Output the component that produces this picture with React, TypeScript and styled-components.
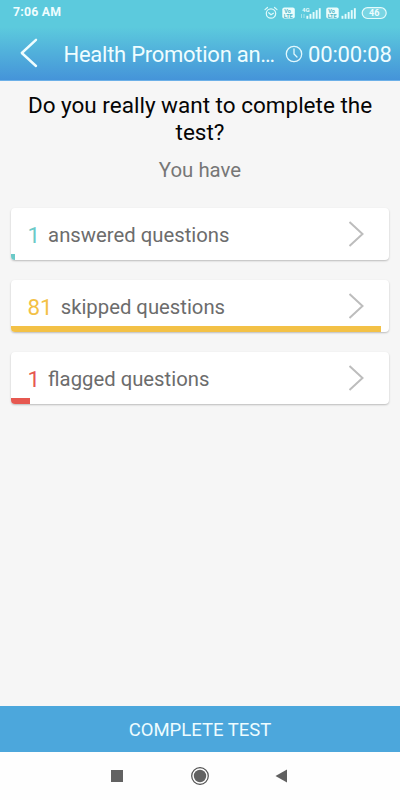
import React from "react";
import styled, { createGlobalStyle } from "styled-components";

const GlobalStyle = createGlobalStyle`
  * { box-sizing: border-box; }
  body { margin: 0; background: #f6f6f6; font-family: Roboto, sans-serif; }
`;

const Screen = styled.div`
  display: flex;
  flex-direction: column;
  width: 400px;
  height: 800px;
  background: #f6f6f6;
  overflow: hidden;
`;

const Header = styled.header`
  height: 81px;
  flex: none;
  background: linear-gradient(#5ccadd 0, #5ccadd 27px, #4594d9 80px, #6cb0e8 80px);
  color: #effdff;
`;

const StatusBar = styled.div`
  display: flex;
  align-items: center;
  justify-content: space-between;
  height: 25px;
  padding: 0 13px;
`;

const StatusTime = styled.span`
  font-size: 12.3px;
  font-weight: 700;
  letter-spacing: 0.2px;
  line-height: 25px;
`;

const StatusIcons = styled.svg`
  display: block;
  width: 124px;
  height: 14px;
`;

const TitleBar = styled.div`
  display: flex;
  align-items: center;
  height: 56px;
  padding: 0 9px 0 20px;
`;

const BackIcon = styled.svg`
  width: 18px;
  height: 30px;
  flex: none;
`;

const Title = styled.h1`
  margin: 4px 0 0 25.5px;
  width: 212.5px;
  flex: none;
  font-size: 22px;
  letter-spacing: -0.26px;
  line-height: 28px;
  font-weight: 400;
  white-space: nowrap;
`;

const ClockIcon = styled.svg`
  width: 18px;
  height: 18px;
  flex: none;
  margin: 1px 0 0 9px;
`;

const Timer = styled.span`
  margin: 4px 0 0 5px;
  font-size: 22px;
  letter-spacing: -0.15px;
  line-height: 28px;
  white-space: nowrap;
`;

const Content = styled.main`
  flex: 1;
  padding: 11px 11px 0;
`;

const Question = styled.h2`
  margin: 0;
  color: #050505;
  font-size: 22.5px;
  line-height: 27px;
  font-weight: 400;
  text-align: center;
`;

const Subtitle = styled.p`
  margin: 11px 0 25px;
  color: #777;
  font-size: 20.4px;
  line-height: 26px;
  text-align: center;
`;

const CardList = styled.div`
  display: grid;
  gap: 20px;
`;

const Card = styled.button`
  display: flex;
  flex-direction: column;
  width: 378px;
  height: 52px;
  padding: 0;
  border: 0;
  border-radius: 4px;
  background: #fff;
  box-shadow: 0 1px 2px rgba(0, 0, 0, 0.24);
  overflow: hidden;
  font-family: inherit;
  text-align: left;
`;

const CardRow = styled.span`
  display: flex;
  align-items: center;
  width: 100%;
  height: 46px;
  padding: 8px 24px 0 16.5px;
`;

const Count = styled.span<{ $color: string }>`
  color: ${(p) => p.$color};
  font-size: 22.4px;
  line-height: 28px;
`;

const Label = styled.span`
  flex: 1;
  margin-left: 8px;
  color: #6c6c6c;
  font-size: 20.3px;
  line-height: 28px;
`;

const Chevron = styled.svg`
  width: 18px;
  height: 28px;
  margin-top: -2px;
`;

const Progress = styled.span<{ $color: string; $width: number }>`
  width: ${(p) => p.$width}px;
  height: 6px;
  background: ${(p) => p.$color};
`;

const CompleteButton = styled.button`
  flex: none;
  height: 46px;
  padding: 2px 0 0;
  border: 0;
  background: #4ca7dc;
  color: #edfcff;
  font-family: inherit;
  font-size: 18.5px;
  text-align: center;
`;

const NavBar = styled.nav`
  display: flex;
  flex: none;
  align-items: center;
  justify-content: space-between;
  height: 48px;
  padding: 0 109px;
  background: #fefefe;
`;

const NavIcon = styled.svg`
  width: 20px;
  height: 20px;
`;

const rows = [
  { count: "1", label: "answered questions", color: "#6bcac8", width: 4 },
  { count: "81", label: "skipped questions", color: "#f3c146", width: 370 },
  { count: "1", label: "flagged questions", color: "#e65850", width: 19 },
];

const signalBars = [0, 1, 2, 3, 4];

function VoLte({ x }: { x: number }) {
  return (
    <g transform={`translate(${x} 1.5)`}>
      <rect width="12.5" height="11" rx="2" fill="#e9fcfc" />
      <g fill="#4fb6c7" fontFamily="Roboto" fontWeight="700" fontSize="5.5">
        <text x="2" y="5.2">Vo</text>
        <text x="1.5" y="10">LTE</text>
      </g>
    </g>
  );
}

function Signal({ x }: { x: number }) {
  return (
    <g fill="#e4fbfc">
      {signalBars.map((i) => (
        <rect key={i} x={x + i * 3.1} y={9.8 - i * 1.9} width="1.9" height={3 + i * 1.9} />
      ))}
    </g>
  );
}

export default function App() {
  return (
    <Screen>
      <GlobalStyle />
      <Header>
        <StatusBar>
          <StatusTime>7:06 AM</StatusTime>
          <StatusIcons viewBox="0 0 124 14">
            <g fill="none" stroke="#dff9fa" strokeWidth="1.2" strokeLinecap="round">
              <circle cx="8" cy="7.5" r="4.7" />
              <path d="M2 3.6 4.5 1.5M11.5 1.5 14 3.6M5.7 6.7 8 8.7l2.4-1.5" />
            </g>
            <VoLte x={19.3} />
            <text x="39" y="5.5" fill="#e4fbfc" fontFamily="Roboto" fontSize="6" fontWeight="700">4G</text>
            <path d="M38.5 8v4M41 8v4" stroke="#b5eaf0" strokeWidth=".8" />
            <Signal x={43.4} />
            <VoLte x={63.2} />
            <Signal x={78.5} />
            <rect x="99.2" y="1.7" width="24" height="10.8" rx="5.4" fill="#79d5e3" stroke="#e4fbfc" strokeWidth="1.2" />
            <text x="111.2" y="10.3" fill="#effdff" fontFamily="Roboto" fontSize="9" fontWeight="700" textAnchor="middle">46</text>
          </StatusIcons>
        </StatusBar>
        <TitleBar>
          <BackIcon viewBox="0 0 18 30">
            <path d="M16 1.8 1.8 15 16 28" fill="none" stroke="#effdff" strokeWidth="2.4" strokeLinecap="round" strokeLinejoin="round" />
          </BackIcon>
          <Title>Health Promotion an…</Title>
          <ClockIcon viewBox="0 0 18 18">
            <circle cx="9" cy="9" r="7.7" fill="none" stroke="#e2f8fd" strokeWidth="1.3" />
            <path d="M9 4v5l3 3" fill="none" stroke="#e2f8fd" strokeWidth="1.3" strokeLinecap="round" />
          </ClockIcon>
          <Timer>00:00:08</Timer>
        </TitleBar>
      </Header>
      <Content>
        <Question>Do you really want to complete the test?</Question>
        <Subtitle>You have</Subtitle>
        <CardList>
          {rows.map((row) => (
            <Card key={row.label}>
              <CardRow>
                <Count $color={row.color}>{row.count}</Count>
                <Label>{row.label}</Label>
                <Chevron viewBox="0 0 18 28">
                  <path d="M2.5 2 15.5 14 2.5 26" fill="none" stroke="#bdbdbd" strokeWidth="2" />
                </Chevron>
              </CardRow>
              <Progress $color={row.color} $width={row.width} />
            </Card>
          ))}
        </CardList>
      </Content>
      <CompleteButton>COMPLETE TEST</CompleteButton>
      <NavBar>
        <NavIcon viewBox="0 0 20 20">
          <rect x="2" y="4" width="12" height="12" fill="#626262" />
        </NavIcon>
        <NavIcon viewBox="0 0 20 20">
          <circle cx="10" cy="10" r="8.3" fill="none" stroke="#505050" strokeWidth="1.2" />
          <circle cx="10" cy="10" r="6.2" fill="#626262" />
        </NavIcon>
        <NavIcon viewBox="0 0 20 20">
          <path d="M16 3.5v13L4.5 10z" fill="#606060" />
        </NavIcon>
      </NavBar>
    </Screen>
  );
}
